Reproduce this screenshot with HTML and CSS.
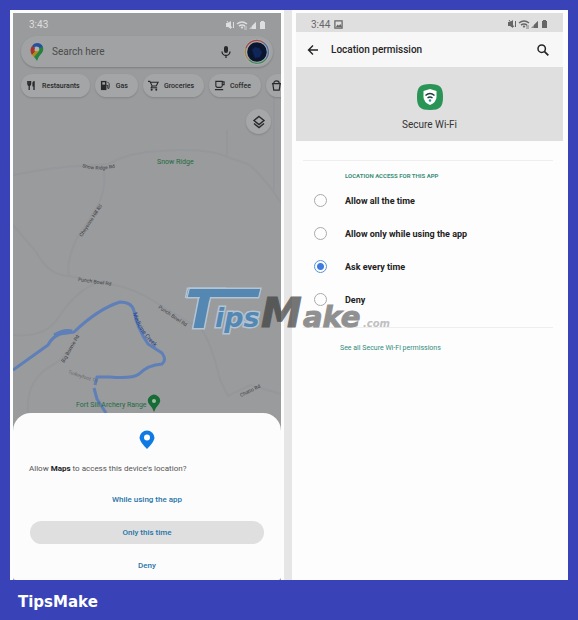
FILE: index.html
```html
<!DOCTYPE html>
<html lang="en">
<head>
    <meta charset="UTF-8">
    <meta name="viewport" content="width=device-width, initial-scale=1.0">
    <title>Location permission - TipsMake</title>
    <link rel="stylesheet" href="styles.css">
</head>
<body>
    <svg class="sprite" aria-hidden="true">
        <symbol id="signals" viewBox="0 0 40 10">
            <path d="M0 3h2l3-2v8l-3-2H0z"/>
            <path d="M1 1l5 7M7.500 2v6" fill="none" stroke="currentColor"/>
            <path d="M11 4q5-4 10 0M13 6q3-2 6 0" fill="none" stroke="currentColor" stroke-width="1.6"/>
            <path d="M15 7h2l-1 1.500zM18 7h3M18 9h3" stroke="currentColor" stroke-width=".8"/>
            <path d="M23 9l7-7v7z" opacity=".7"/>
            <path d="M26 9V6l4-4v7z"/>
            <path d="M34 2h1V1h3v1h1v7h-5z"/>
        </symbol>
    </svg>

    <main class="frame">
        <section class="phone maps">
            <svg class="map" viewBox="13 13 268 567" preserveAspectRatio="xMidYMin slice">
                <g class="road">
                    <path d="M13 175Q60 166 82 166L108 164Q130 152 160 151Q208 147 230 158L248 164Q265 177 281 203"/>
                    <path d="M104 170Q106 190 98 205L76 240Q66 262 69 276Q48 275 37 253L13 225"/>
                    <path d="M227 130V158M274 97V190"/>
                    <path d="M13 335Q45 338 58 318Q80 285 105 281"/>
                    <path d="M69 276L110 284Q135 288 160 305L202 330Q212 345 220 380L228 396L250 385L281 394"/>
                    <path d="M28 413Q26 384 45 370L60 360Q80 338 78 330"/>
                </g>
                <path class="river" d="M13 370L48 345Q52 337 60 334L74 332Q98 309 120 302Q132 302 134 311Q137 328 148 344L162 353Q167 360 162 364Q148 365 139 374Q132 379 110 377H97L95 385"/>
                <path class="river" d="M54 335Q64 329 72 331"/>
                <path class="river" d="M94 388L97 399L106 413"/>
                <path id="ridge" class="guide" d="M82 167Q98 172 118 167"/>
                <path id="creek" class="guide" d="M133 313Q138 334 160 351"/>
                <path id="turkey" class="guide" d="M68 373Q78 377 104 385"/>
                <text class="street"><textPath href="#ridge">Snow Ridge Rd</textPath></text>
                <text class="street" transform="translate(82 237) rotate(-57)">Cheyenne Hill Rd</text>
                <text class="street" transform="translate(78 281) rotate(8)">Punch Bowl Rd</text>
                <text class="street" transform="translate(158 308) rotate(34)">Punch Bowl Rd</text>
                <text class="street" transform="translate(64 363) rotate(-60)">Big Bonnie Rd</text>
                <text class="street" transform="translate(241 397) rotate(-26)">Chatto Rd</text>
                <text class="street faint"><textPath href="#turkey">Turkeyfoot Trl</textPath></text>
                <text class="creek"><textPath href="#creek">Medicine Creek</textPath></text>
                <text class="place" x="157" y="164">Snow Ridge</text>
                <text class="place" x="76" y="407">Fort Sill Archery Range</text>
                <path d="M154 412Q152 407 149 404A6 6 0 1 1 159 404Q156 407 154 412z" fill="#176b35"/>
                <circle cx="154" cy="401" r="2" fill="#9dbda5"/>
            </svg>

            <header class="status status-light">
                <span>3:43</span>
                <svg class="signals"><use href="#signals"/></svg>
            </header>

            <form class="search">
                <svg class="gmaps" viewBox="0 0 14 18">
                    <path d="M7 0A6.500 6.500 0 0 1 13 4L9 9A3 3 0 0 0 4 5L2 3A6.500 6.500 0 0 1 7 0z" fill="#2450a0"/>
                    <path d="M2 3L5 5Q4 7 5 9L2 12Q-1 7 2 3z" fill="#a53225"/>
                    <path d="M2 12L9 4Q10 6 9 8L4 14Z" fill="#b08a14"/>
                    <path d="M13 4Q14 8 11 11Q8 14 7 18Q6 16 4 14L9 8Q10 6 9 5z" fill="#24823d"/>
                    <circle cx="7" cy="6" r="2.200" fill="#b0b1b2"/>
                </svg>
                <input type="text" placeholder="Search here" aria-label="Search here">
                <svg class="mic" viewBox="0 0 10 14">
                    <rect x="3" y="1" width="4" height="7" rx="2"/>
                    <path d="M1 6.500a4 4 0 0 0 8 0M5 10.500V13" fill="none" stroke="currentColor" stroke-width="1.300"/>
                </svg>
                <svg class="avatar" viewBox="0 0 26 26">
                    <circle cx="13" cy="13" r="13" fill="#aaabac"/>
                    <g fill="none" stroke-width="1.200">
                        <path d="M2 9A11.500 11.500 0 0 1 20 4" stroke="#a04a42"/>
                        <path d="M20 4A11.500 11.500 0 0 1 22 20" stroke="#4869a0"/>
                        <path d="M22 20A11.500 11.500 0 0 1 5 21" stroke="#408a58"/>
                        <path d="M5 21A11.500 11.500 0 0 1 2 9" stroke="#a38c45"/>
                    </g>
                    <circle cx="13" cy="13" r="9.800" fill="#0a1530"/>
                    <path d="M8 11l3-3 4 1 3 4-2 5-5 1z" fill="#102657"/>
                </svg>
            </form>

            <nav class="chips">
                <button type="button">
                    <svg viewBox="0 0 12 12"><path d="M2 1v3q0 2 1.500 2T5 4V1M3.500 1v10" fill="none" stroke="currentColor" stroke-width="1.400"/><path d="M7 7V3q0-2 2.500-2v10H8V7z"/></svg>
                    Restaurants
                </button>
                <button type="button">
                    <svg viewBox="0 0 12 12"><path d="M1 1h6v10H1z"/><path d="M2.500 2.500h3v2.500h-3z" fill="#a4a5a6"/><path d="M7 6h1.500v3q1.500 1 1.500-1V4L8 2" fill="none" stroke="currentColor"/></svg>
                    Gas
                </button>
                <button type="button">
                    <svg viewBox="0 0 12 12"><path d="M0 1.500h2l2.500 5H9l2-4H3M4.500 6.500L3.500 8.500H10" fill="none" stroke="currentColor" stroke-width="1.200"/><circle cx="4" cy="10.500" r="1.100"/><circle cx="9" cy="10.500" r="1.100"/></svg>
                    Groceries
                </button>
                <button type="button">
                    <svg viewBox="0 0 12 12"><path d="M2 1.500h7V6q0 2-2 2H4Q2 8 2 6zM9 2h2v3H9M1 10.500h9" fill="none" stroke="currentColor" stroke-width="1.200"/></svg>
                    Coffee
                </button>
                <button type="button" aria-label="Shopping">
                    <svg viewBox="0 0 12 12"><path d="M1 4h10M2 4l1 7h6l1-7M3 4q0-3 3-3t3 3" fill="none" stroke="currentColor" stroke-width="1.300"/></svg>
                </button>
            </nav>

            <button type="button" class="layers" aria-label="Layers">
                <svg viewBox="0 0 14 14"><path d="M7 1.500l5 4-5 4-5-4zM2 8.500l5 4 5-4" fill="none" stroke="currentColor" stroke-width="1.400"/></svg>
            </button>

            <div class="sheet">
                <svg class="pin" viewBox="0 0 16 19">
                    <path d="M8 19Q1 12 .5 8A7.500 7.500 0 0 1 15.500 8Q15 12 8 19z" fill="#0f7be2"/>
                    <circle cx="8" cy="7.500" r="3" fill="#fcfcfc"/>
                </svg>
                <p>Allow <b>Maps</b> to access this device's location?</p>
                <button type="button">While using the app</button>
                <button type="button" class="pressed">Only this time</button>
                <button type="button">Deny</button>
            </div>
        </section>

        <section class="phone settings">
            <header class="status">
                <span>3:44</span>
                <svg class="photo" viewBox="0 0 10 10"><path d="M1 1h8v8H1z" fill="none" stroke="currentColor" stroke-width="1.400"/><path d="M2 8l2-3 1.500 1.500L7 4.500 9 8z"/></svg>
                <svg class="signals"><use href="#signals"/></svg>
            </header>

            <div class="appbar">
                <button type="button" aria-label="Back">
                    <svg viewBox="0 0 12 12"><path d="M11 6H1.500M6 1.500L1.500 6 6 10.500" fill="none" stroke="currentColor" stroke-width="1.400"/></svg>
                </button>
                <h1>Location permission</h1>
                <button type="button" aria-label="Search">
                    <svg viewBox="0 0 12 12"><circle cx="4.700" cy="4.700" r="3.700" fill="none" stroke="currentColor" stroke-width="1.500"/><path d="M7.300 7.300l4 4" stroke="currentColor" stroke-width="1.800"/></svg>
                </button>
            </div>

            <div class="app">
                <svg viewBox="0 0 26 26">
                    <path d="M13 0C23 0 26 3 26 13S23 26 13 26 0 23 0 13 3 0 13 0z" fill="#2a9457"/>
                    <path d="M13 5l6.500 2v6q0 5-6.500 8-6.500-3-6.500-8V7z" fill="#fff"/>
                    <path d="M8.500 11.500q4.500-4 9 0M10.500 14q2.500-2 5 0" fill="none" stroke="#1d3f35" stroke-width="1.500"/>
                    <circle cx="13" cy="16.500" r="1.200" fill="#2c8fa0"/>
                </svg>
                <span>Secure Wi-Fi</span>
            </div>

            <form class="access">
                <h2>LOCATION ACCESS FOR THIS APP</h2>
                <label><input type="radio" name="access">Allow all the time</label>
                <label><input type="radio" name="access">Allow only while using the app</label>
                <label><input type="radio" name="access" checked>Ask every time</label>
                <label><input type="radio" name="access">Deny</label>
            </form>
            <a class="see-all" href="#">See all Secure Wi-Fi permissions</a>
        </section>

        <svg class="watermark" viewBox="0 0 220 50">
            <g class="wm-blue">
                <text x="2" y="45" font-size="54">T</text>
                <path d="M8 6H78L76 14H6z"/>
                <path class="wm-join" d="M8 6H78L76 14H28L27 18H17L18 14H6z"/>
                <text x="33" y="44" font-size="27">ips</text>
            </g>
            <text class="wm-m" x="79" y="44" font-size="41">M</text>
            <text class="wm-grey" x="121" y="44" font-size="29">ake</text>
            <text class="wm-com" x="181" y="44" font-size="10">.com</text>
        </svg>
    </main>

    <footer class="brand">TipsMake</footer>
</body>
</html>
```
FILE: styles.css
```css
* {
    margin: 0;
    padding: 0;
    box-sizing: border-box;
}

body {
    min-height: 100vh;
    display: flex;
    flex-direction: column;
    background: #3943b7;
    font-family: Roboto, sans-serif;
    font-size: 10px;
}

button {
    border: none;
    background: none;
    color: inherit;
    font: inherit;
    cursor: pointer;
}

svg {
    display: block;
    flex: none;
    fill: currentColor;
}

.sprite {
    position: absolute;
    width: 0;
    height: 0;
}

.frame {
    position: relative;
    flex: 1;
    display: grid;
    grid-template-columns: 137fr 138fr;
    gap: 8px;
    margin: 10px 10px 0;
    background: #e6e6e6;
}

.phone {
    position: relative;
    display: flex;
    flex-direction: column;
    min-width: 0;
    border: solid #fdfdfd;
    border-width: 3px 5px 0 4px;
    overflow: hidden;
}

.status {
    display: flex;
    align-items: center;
    gap: 4px;
    height: 19px;
    padding: 3px 15px 0;
    background: #dfdfdf;
    color: #666;
}

.status .signals {
    width: 40px;
    height: 10px;
    margin-left: auto;
}

.photo {
    width: 9px;
    height: 9px;
}

/* map */

.maps {
    border-width: 3px 3px 0;
    background: #9a9b9d;
    color: #28292a;
}

.map {
    position: absolute;
    inset: 0;
    width: 100%;
    height: 100%;
}

.status-light {
    position: relative;
    height: 23px;
    padding: 0 15px 0 16px;
    background: none;
    color: #dedede;
}

.road {
    fill: none;
    stroke: #95979a;
    stroke-width: 2;
}

.river {
    fill: none;
    stroke: #5f7fb8;
    stroke-width: 3;
    stroke-linejoin: round;
}

.guide {
    fill: none;
}

.street {
    font-size: 5px;
    fill: #3c3d3f;
}

.faint {
    fill: #66686a;
}

.creek {
    font-size: 6px;
    fill: #203c86;
}

.place {
    font-size: 7px;
    fill: #1f6b41;
}

.search {
    position: relative;
    display: flex;
    align-items: center;
    height: 31px;
    margin: 0 8px;
    padding: 0 3px 0 9px;
    border-radius: 16px;
    background: #a1a2a3;
    box-shadow: 0 1px 2px rgba(0, 0, 0, 0.2);
}

.gmaps {
    width: 14px;
    height: 18px;
}

.search input {
    flex: 1;
    min-width: 0;
    margin-left: 8px;
    border: none;
    outline: none;
    background: none;
    font-family: inherit;
    font-size: 10px;
}

.search input::placeholder {
    color: #4b4c4d;
    opacity: 1;
}

.mic {
    width: 10px;
    height: 14px;
    margin-right: 13px;
}

.avatar {
    width: 26px;
    height: 26px;
}

.chips {
    position: relative;
    display: flex;
    gap: 5px;
    margin-top: 7px;
    padding-left: 8px;
}

.chips button {
    flex: none;
    display: flex;
    align-items: center;
    gap: 5px;
    height: 23px;
    padding: 0 10px 0 5px;
    border-radius: 12px;
    background: #a4a5a6;
    box-shadow: 0 1px 2px rgba(0, 0, 0, 0.15);
    font-size: 7px;
    font-weight: 500;
}

.chips svg {
    width: 11px;
    height: 11px;
}

.layers {
    position: relative;
    align-self: flex-end;
    display: grid;
    place-items: center;
    width: 25px;
    height: 25px;
    margin: 12px 10px;
    border-radius: 50%;
    background: #a6a7a8;
    box-shadow: 0 1px 2px rgba(0, 0, 0, 0.15);
}

.layers svg {
    width: 14px;
    height: 14px;
}

.sheet {
    position: relative;
    display: flex;
    flex-direction: column;
    align-items: center;
    gap: 10px;
    margin-top: auto;
    padding: 17px 16px 3px;
    border-radius: 18px 18px 3px 3px;
    background: #fcfcfc;
    color: #1f74a8;
    font-size: 8px;
    font-weight: 500;
}

.pin {
    width: 16px;
    height: 19px;
}

.sheet p {
    align-self: stretch;
    line-height: 19px;
    font-weight: 400;
    color: #555;
}

.sheet b {
    color: #222;
}

.sheet button {
    width: 100%;
    max-width: 234px;
    height: 23px;
    border-radius: 12px;
}

.sheet .pressed {
    background: #dfdfdf;
}

/* settings */

.settings {
    background: #fdfdfd;
}

.appbar {
    display: flex;
    align-items: center;
    gap: 12px;
    height: 35px;
    padding: 0 14px 0 11px;
    background: #f7f7f7;
    color: #252525;
}

.appbar svg {
    width: 12px;
    height: 12px;
}

.appbar h1 {
    flex: 1;
    font-size: 10px;
    font-weight: 500;
}

.app {
    display: flex;
    flex-direction: column;
    align-items: center;
    gap: 9px;
    height: 74px;
    padding-top: 17px;
    background: #dfdfdf;
    color: #333;
}

.app svg {
    width: 26px;
    height: 26px;
}

.access {
    margin: 19px 10px 0 7px;
    padding-bottom: 11px;
    border: solid #eee;
    border-width: 1px 0;
}

.access h2 {
    padding-left: 42px;
    margin-top: 10px;
    line-height: 10px;
    font-size: 6px;
    font-weight: 700;
    color: #3d8f7b;
}

.access label {
    display: flex;
    align-items: center;
    gap: 18px;
    height: 33px;
    padding-left: 11px;
    font-size: 9px;
    font-weight: 700;
    color: #222;
}

.access h2 + label {
    margin-top: 3px;
}

.access input {
    appearance: none;
    width: 13px;
    height: 13px;
    border: 1px solid #aaa;
    border-radius: 50%;
}

.access input:checked {
    border-color: #5595d5;
    background: radial-gradient(circle, #3f7be0 3px, transparent 4px);
}

.see-all {
    align-self: flex-start;
    margin: 14px 44px;
    line-height: 12px;
    font-size: 7px;
    color: #2f8c7c;
    text-decoration: none;
}

.watermark {
    position: absolute;
    left: 172px;
    top: 273px;
    width: 220px;
    height: 50px;
    overflow: visible;
    font-family: "DejaVu Sans", sans-serif;
    font-weight: 700;
    font-style: italic;
    pointer-events: none;
}

.wm-blue {
    fill: #5488b3;
    stroke: #b4c4d3;
    stroke-width: 3;
    paint-order: stroke;
}

.wm-join {
    stroke: none;
}

.wm-m {
    fill: #3c3c3c;
    stroke: #3c3c3c;
    opacity: 0.7;
}

.wm-grey {
    fill: #858585;
    stroke: #858585;
    opacity: 0.9;
}

.wm-com {
    fill: #c0c0c0;
}

.brand {
    height: 40px;
    padding: 0 18px;
    line-height: 44px;
    font-family: "DejaVu Sans", sans-serif;
    font-size: 15px;
    font-weight: 700;
    color: #fff;
}
```
